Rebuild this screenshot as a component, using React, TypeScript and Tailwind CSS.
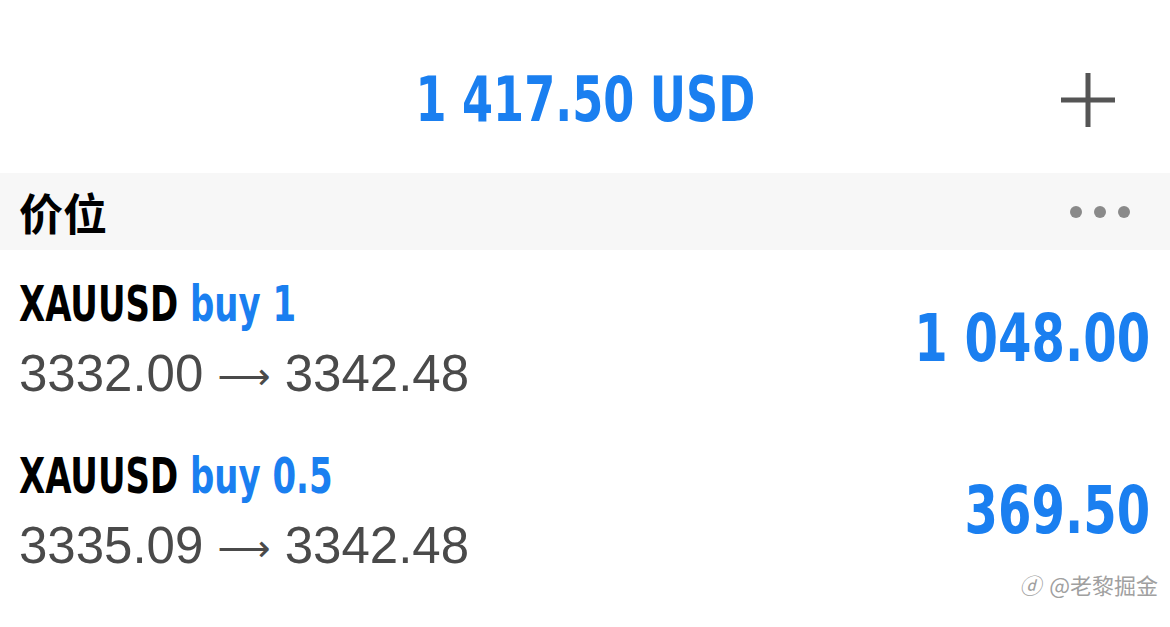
import React from 'react';

const cond = { fontFamily: '"DejaVu Sans Condensed", "Noto Sans CJK SC", sans-serif' };
const plain = { fontFamily: '"Liberation Sans", Arial, sans-serif' };
const arrow = { fontFamily: '"DejaVu Sans", sans-serif' };

const positions = [
  { symbol: 'XAUUSD', side: 'buy 1', open: '3332.00', close: '3342.48', profit: '1 048.00' },
  { symbol: 'XAUUSD', side: 'buy 0.5', open: '3335.09', close: '3342.48', profit: '369.50' },
];

export default function App() {
  return (
    <div className="w-[1170px] h-[627px] bg-white overflow-hidden relative">
      {/* Header */}
      <div className="h-[173px] pt-[27px] grid grid-cols-[1fr_auto_1fr] items-center">
        <div />
        <div
          className="inline-block text-[62px] font-bold text-[#1a7ff0] leading-none whitespace-nowrap scale-x-[0.8] origin-center"
          style={cond}
        >
          1 417.50 USD
        </div>
        <div className="flex justify-end pr-[55px]">
          <svg width="54" height="54" viewBox="0 0 54 54">
            <rect x="24.5" y="0" width="5" height="54" fill="#555" />
            <rect x="0" y="24.5" width="54" height="5" fill="#555" />
          </svg>
        </div>
      </div>

      {/* Section band */}
      <div className="h-[77px] bg-[#f7f7f7] flex items-center justify-between pl-[19px] pr-[40px]">
        <div className="text-[44px] font-bold text-black leading-none" style={{ fontFamily: '"Noto Sans CJK SC", sans-serif' }}>
          价位
        </div>
        <div className="flex gap-[12px]">
          <span className="w-[12px] h-[12px] rounded-full bg-[#8a8a8a]" />
          <span className="w-[12px] h-[12px] rounded-full bg-[#8a8a8a]" />
          <span className="w-[12px] h-[12px] rounded-full bg-[#8a8a8a]" />
        </div>
      </div>

      {/* Rows */}
      {positions.map((p, i) => (
        <div key={i} className="h-[172px] flex items-start justify-between pl-[19px] pr-[20px] pt-[26px]">
          <div className="flex flex-col items-start">
            <div
              className="inline-block text-[50px] font-bold leading-[56px] whitespace-nowrap scale-x-[0.755] origin-left"
              style={cond}
            >
              <span className="text-black">{p.symbol}</span>{' '}
              <span className="text-[#1a7ff0]">{p.side}</span>
            </div>
            <div className="text-[51px] text-[#4a4a4a] leading-[60px] mt-[12px] whitespace-nowrap" style={plain}>
              {p.open} <span className="text-[37px] relative top-[-2px]" style={arrow}>⟶</span> {p.close}
            </div>
          </div>
          <div
            className="inline-block text-[66px] font-bold text-[#1a7ff0] leading-none mt-[30px] whitespace-nowrap scale-x-[0.81] origin-right"
            style={cond}
          >
            {p.profit}
          </div>
        </div>
      ))}

      {/* Watermark */}
      <div
        className="absolute right-[12px] bottom-[26px] flex items-center gap-[8px] text-[#a0a0a0] text-[22px]"
        style={{ fontFamily: '"Noto Sans CJK SC", sans-serif' }}
      >
        <span className="italic">ⓓ</span>
        <span>@老黎掘金</span>
      </div>
    </div>
  );
}
